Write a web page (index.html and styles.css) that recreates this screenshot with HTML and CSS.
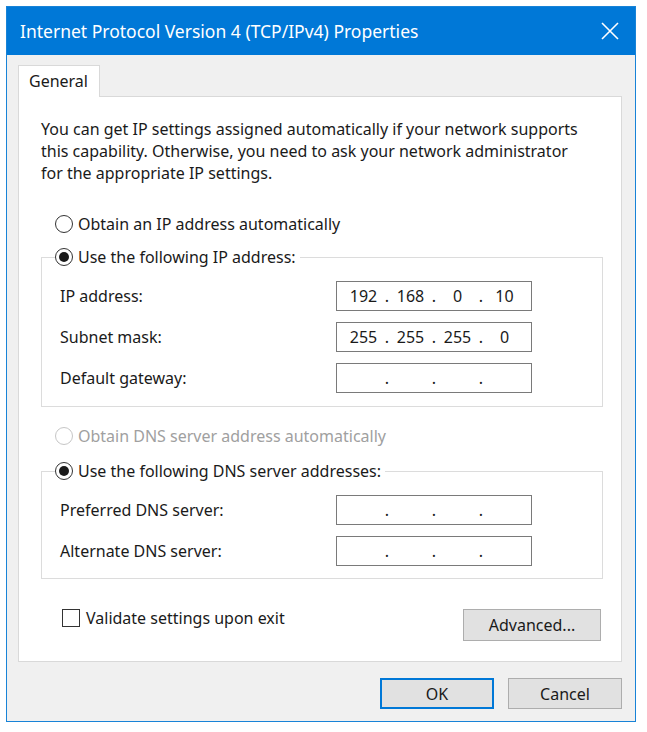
FILE: index.html
```html
<!DOCTYPE html>
<html lang="en">
<head>
    <meta charset="UTF-8">
    <meta name="viewport" content="width=device-width, initial-scale=1.0">
    <title>Internet Protocol Version 4 (TCP/IPv4) Properties</title>
    <link rel="stylesheet" href="styles.css">
</head>
<body>
    <div class="window">
        <div class="titlebar">
            <span class="title">Internet Protocol Version 4 (TCP/IPv4) Properties</span>
            <svg class="close" width="18" height="18" viewBox="0 0 18 18">
                <path d="M1 1 L17 17 M17 1 L1 17" stroke="#fff" stroke-width="1.6" fill="none"/>
            </svg>
        </div>

        <div class="content">
            <div class="tabs">
                <div class="tab">General</div>
            </div>

            <div class="panel">
                <p class="intro">You can get IP settings assigned automatically if your network supports<br>
                this capability. Otherwise, you need to ask your network administrator<br>
                for the appropriate IP settings.</p>

                <div class="radio-row first">
                    <span class="radio"></span>
                    <span>Obtain an IP address automatically</span>
                </div>

                <fieldset class="group">
                    <legend class="radio-row">
                        <span class="radio checked"></span>
                        <span>Use the following IP address:</span>
                    </legend>
                    <div class="field-row">
                        <span class="label">IP address:</span>
                        <div class="ip-box">
                            <span class="seg">192</span><span class="dot">.</span>
                            <span class="seg">168</span><span class="dot">.</span>
                            <span class="seg">0</span><span class="dot">.</span>
                            <span class="seg">10</span>
                        </div>
                    </div>
                    <div class="field-row">
                        <span class="label">Subnet mask:</span>
                        <div class="ip-box">
                            <span class="seg">255</span><span class="dot">.</span>
                            <span class="seg">255</span><span class="dot">.</span>
                            <span class="seg">255</span><span class="dot">.</span>
                            <span class="seg">0</span>
                        </div>
                    </div>
                    <div class="field-row">
                        <span class="label">Default gateway:</span>
                        <div class="ip-box">
                            <span class="seg"></span><span class="dot">.</span>
                            <span class="seg"></span><span class="dot">.</span>
                            <span class="seg"></span><span class="dot">.</span>
                            <span class="seg"></span>
                        </div>
                    </div>
                </fieldset>

                <div class="radio-row disabled">
                    <span class="radio"></span>
                    <span>Obtain DNS server address automatically</span>
                </div>

                <fieldset class="group dns">
                    <legend class="radio-row">
                        <span class="radio checked"></span>
                        <span>Use the following DNS server addresses:</span>
                    </legend>
                    <div class="field-row">
                        <span class="label">Preferred DNS server:</span>
                        <div class="ip-box">
                            <span class="seg"></span><span class="dot">.</span>
                            <span class="seg"></span><span class="dot">.</span>
                            <span class="seg"></span><span class="dot">.</span>
                            <span class="seg"></span>
                        </div>
                    </div>
                    <div class="field-row">
                        <span class="label">Alternate DNS server:</span>
                        <div class="ip-box">
                            <span class="seg"></span><span class="dot">.</span>
                            <span class="seg"></span><span class="dot">.</span>
                            <span class="seg"></span><span class="dot">.</span>
                            <span class="seg"></span>
                        </div>
                    </div>
                </fieldset>

                <div class="bottom-row">
                    <div class="check-row">
                        <span class="checkbox"></span>
                        <span>Validate settings upon exit</span>
                    </div>
                    <button class="btn advanced">Advanced...</button>
                </div>
            </div>

            <div class="actions">
                <button class="btn default">OK</button>
                <button class="btn">Cancel</button>
            </div>
        </div>
    </div>
</body>
</html>
```

FILE: styles.css
```css
body {
    margin: 0;
    background: #fff;
    font-family: "Noto Sans", "Open Sans", sans-serif;
    font-size: 16px;
    color: #1a1a1a;
}
.window {
    margin: 6px 0 0 6px;
    width: 630px;
    height: 716px;
    box-sizing: border-box;
    border: 1px solid #1883d7;
    background: #f0f0f0;
}
.titlebar {
    height: 48px;
    background: #0078d7;
    color: #fff;
    display: flex;
    align-items: center;
    justify-content: space-between;
    padding: 0 16px 0 13px;
    font-size: 17.5px;
}
.close {
    display: block;
}
.content {
    padding: 10px 13px 0 11px;
}

/* tab strip */
.tabs {
    display: flex;
    height: 32px;
}
.tab {
    width: 82px;
    box-sizing: border-box;
    background: #fff;
    border: 1px solid #d9d9d9;
    border-bottom: none;
    padding: 4px 0 0 10px;
    position: relative;
    z-index: 1;
}
.panel {
    background: #fff;
    border: 1px solid #d9d9d9;
    margin-top: -1px;
    height: 566px;
    box-sizing: border-box;
    padding: 21px 18px 0 22px;
}
.intro {
    margin: 0;
    line-height: 22px;
    white-space: nowrap;
}

/* radio buttons */
.radio-row {
    display: flex;
    align-items: center;
    gap: 5px;
    height: 22px;
}
.radio-row.first {
    margin: 29px 0 0 14px;
}
.radio-row.disabled {
    color: #a0a0a0;
    margin: 18px 0 0 14px;
}
.radio {
    width: 18px;
    height: 18px;
    box-sizing: border-box;
    border: 1px solid #333;
    border-radius: 50%;
    background: #fff;
    display: flex;
    align-items: center;
    justify-content: center;
}
.radio.checked::after {
    content: "";
    width: 10px;
    height: 10px;
    border-radius: 50%;
    background: #1a1a1a;
}
.disabled .radio {
    border-color: #c6c6c6;
}

/* group boxes */
.group {
    margin: 11px 0 0 0;
    width: 562px;
    box-sizing: border-box;
    border: 1px solid #dcdcdc;
    padding: 13px 0 13px 18px;
}
.group.dns {
    margin-top: 13px;
    padding-bottom: 12px;
}
.group legend {
    padding: 0 4px 0 0;
    margin-left: -5px;
    background: #fff;
}
.field-row {
    display: flex;
    align-items: center;
    justify-content: space-between;
    padding-right: 70px;
    height: 30px;
    margin-top: 11px;
}
.field-row:first-of-type {
    margin-top: 0;
}
.ip-box {
    width: 196px;
    height: 30px;
    box-sizing: border-box;
    border: 1px solid #7a7a7a;
    background: #fff;
    display: flex;
    align-items: center;
    padding-left: 8px;
}
.seg {
    width: 37px;
    text-align: center;
}
.dot {
    width: 10px;
    text-align: center;
}

/* checkbox and buttons */
.bottom-row {
    display: flex;
    align-items: flex-start;
    justify-content: space-between;
    margin: 28px 0 0 21px;
    width: 539px;
}
.check-row {
    display: flex;
    align-items: center;
    gap: 6px;
    height: 22px;
}
.checkbox {
    width: 18px;
    height: 18px;
    box-sizing: border-box;
    border: 1px solid #333;
    background: #fff;
}
.btn {
    font-family: inherit;
    font-size: 16px;
    color: #1a1a1a;
    background: #e1e1e1;
    border: 1px solid #adadad;
    width: 114px;
    height: 31px;
    padding: 0;
}
.advanced {
    width: 138px;
    height: 32px;
    margin-top: 2px;
}
.btn.default {
    border: 2px solid #0078d7;
}
.actions {
    display: flex;
    justify-content: flex-end;
    gap: 14px;
    margin-top: 16px;
}
```
